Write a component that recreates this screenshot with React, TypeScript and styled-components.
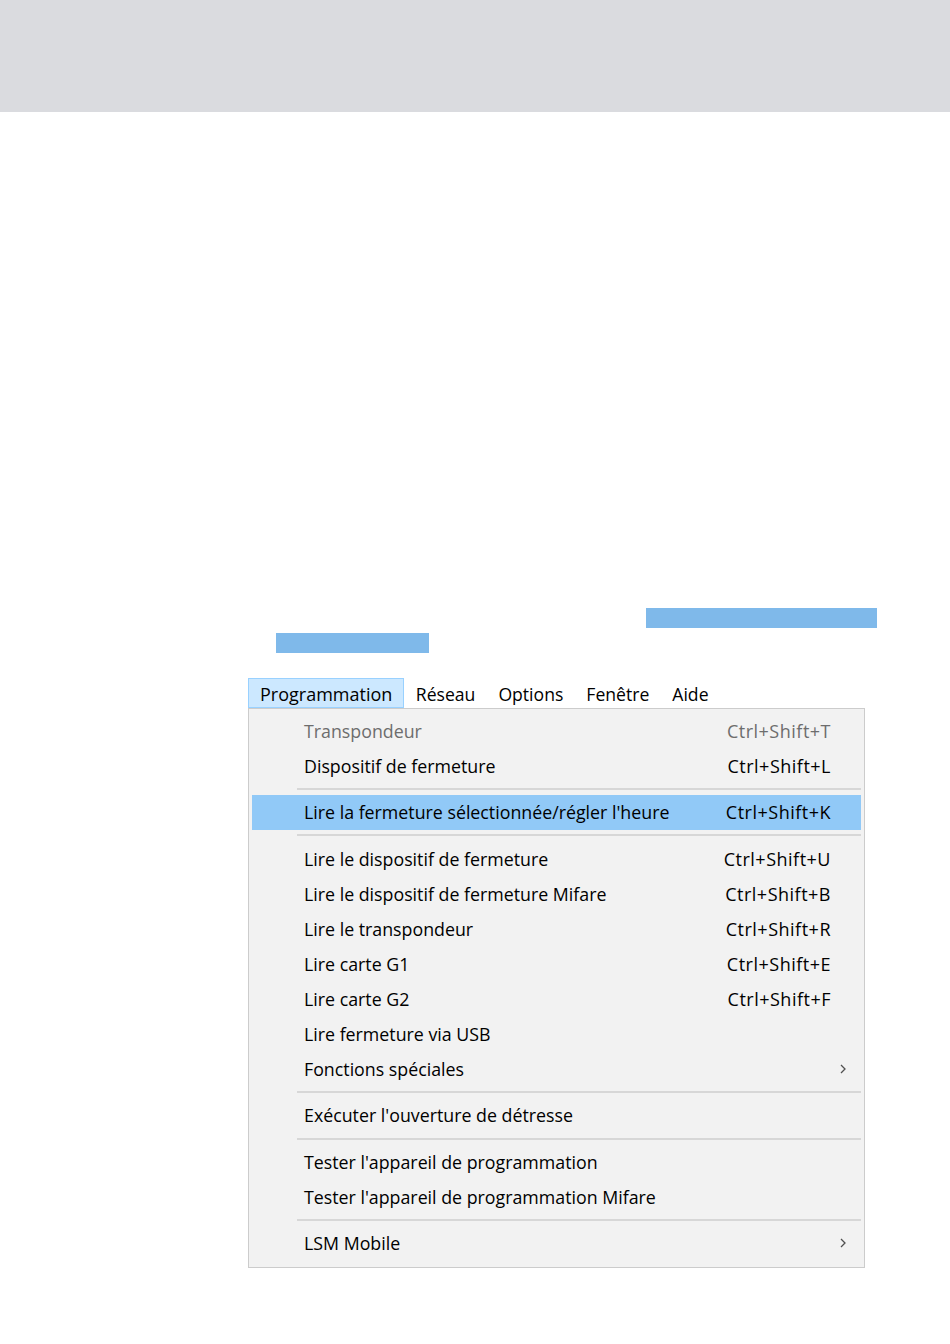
import React from 'react'
import styled, { createGlobalStyle } from 'styled-components'

const GlobalStyle = createGlobalStyle`
  html, body {
    margin: 0;
    padding: 0;
    background: #ffffff;
  }
  body {
    font-family: 'Open Sans', 'Noto Sans', sans-serif;
    color: #000000;
  }
`

const Page = styled.div`
  width: 950px;
  min-height: 1344px;
  background: #ffffff;
`

const TopBand = styled.div`
  height: 112px;
  background: #dadbdf;
`

const Content = styled.div`
  padding-top: 496px;
`

const Highlight = styled.div<{ $left: number; $width: number; $gap?: number }>`
  margin-left: ${p => p.$left}px;
  margin-top: ${p => p.$gap ?? 0}px;
  width: ${p => p.$width}px;
  height: 20px;
  background: #7fb9ea;
`

const MenuWrap = styled.div`
  margin-top: 25px;
  margin-left: 248px;
  width: 617px;
`

const MenuBar = styled.div`
  display: flex;
  height: 30px;
  background: #ffffff;
`

const BarItem = styled.div<{ $active?: boolean }>`
  display: flex;
  align-items: center;
  padding: 1px ${p => (p.$active ? 11 : 10.5)}px 0;
  font-size: ${p => (p.$active ? 18 : 17.6)}px;
  border: 1px solid ${p => (p.$active ? '#99d1ff' : 'transparent')};
  background: ${p => (p.$active ? '#cce8ff' : 'transparent')};
`

const Dropdown = styled.div`
  border: 1px solid #cccccc;
  background: #f2f2f2;
  padding: 4px 3px 6px;
`

const Row = styled.div<{ $selected?: boolean; $disabled?: boolean }>`
  display: grid;
  grid-template-columns: 52px 1fr auto 30px;
  align-items: center;
  height: 35px;
  font-size: 17.8px;
  background: ${p => (p.$selected ? '#91c9f7' : 'transparent')};
  color: ${p => (p.$disabled ? '#6d6d6d' : '#000000')};
`

const Label = styled.span`
  grid-column: 2;
  white-space: nowrap;
`

const Shortcut = styled.span`
  grid-column: 3;
  text-align: right;
  white-space: nowrap;
  font-size: 18px;
  letter-spacing: 0.5px;
`

const Arrow = styled.span`
  grid-column: 4;
  display: flex;
  justify-content: flex-end;
  padding-right: 14px;
`

const Separator = styled.div`
  height: 11.6px;
  margin-left: 45px;
  display: flex;
  align-items: center;
  &::after {
    content: '';
    display: block;
    width: 100%;
    height: 2px;
    background: #d7d7d7;
  }
`

type Entry =
  | { label: string; shortcut?: string; sub?: boolean; selected?: boolean; disabled?: boolean }
  | 'sep'

const entries: Entry[] = [
  { label: 'Transpondeur', shortcut: 'Ctrl+Shift+T', disabled: true },
  { label: 'Dispositif de fermeture', shortcut: 'Ctrl+Shift+L' },
  'sep',
  { label: "Lire la fermeture sélectionnée/régler l'heure", shortcut: 'Ctrl+Shift+K', selected: true },
  'sep',
  { label: 'Lire le dispositif de fermeture', shortcut: 'Ctrl+Shift+U' },
  { label: 'Lire le dispositif de fermeture Mifare', shortcut: 'Ctrl+Shift+B' },
  { label: 'Lire le transpondeur', shortcut: 'Ctrl+Shift+R' },
  { label: 'Lire carte G1', shortcut: 'Ctrl+Shift+E' },
  { label: 'Lire carte G2', shortcut: 'Ctrl+Shift+F' },
  { label: 'Lire fermeture via USB' },
  { label: 'Fonctions spéciales', sub: true },
  'sep',
  { label: "Exécuter l'ouverture de détresse" },
  'sep',
  { label: "Tester l'appareil de programmation" },
  { label: "Tester l'appareil de programmation Mifare" },
  'sep',
  { label: 'LSM Mobile', sub: true },
]

const Chevron = () => (
  <svg width="8" height="12" viewBox="0 0 8 12">
    <path d="M2 2 L6 6 L2 10" fill="none" stroke="#505050" strokeWidth="1.3" />
  </svg>
)

export default function App() {
  return (
    <Page>
      <GlobalStyle />
      <TopBand />
      <Content>
        <Highlight $left={646} $width={231} />
        <Highlight $left={276} $width={153} $gap={5} />
        <MenuWrap>
          <MenuBar>
            <BarItem $active>Programmation</BarItem>
            <BarItem>Réseau</BarItem>
            <BarItem>Options</BarItem>
            <BarItem>Fenêtre</BarItem>
            <BarItem>Aide</BarItem>
          </MenuBar>
          <Dropdown>
            {entries.map((e, i) =>
              e === 'sep' ? (
                <Separator key={i} />
              ) : (
                <Row key={i} $selected={e.selected} $disabled={e.disabled}>
                  <Label>{e.label}</Label>
                  {e.shortcut && <Shortcut>{e.shortcut}</Shortcut>}
                  {e.sub && (
                    <Arrow>
                      <Chevron />
                    </Arrow>
                  )}
                </Row>
              )
            )}
          </Dropdown>
        </MenuWrap>
      </Content>
    </Page>
  )
}
